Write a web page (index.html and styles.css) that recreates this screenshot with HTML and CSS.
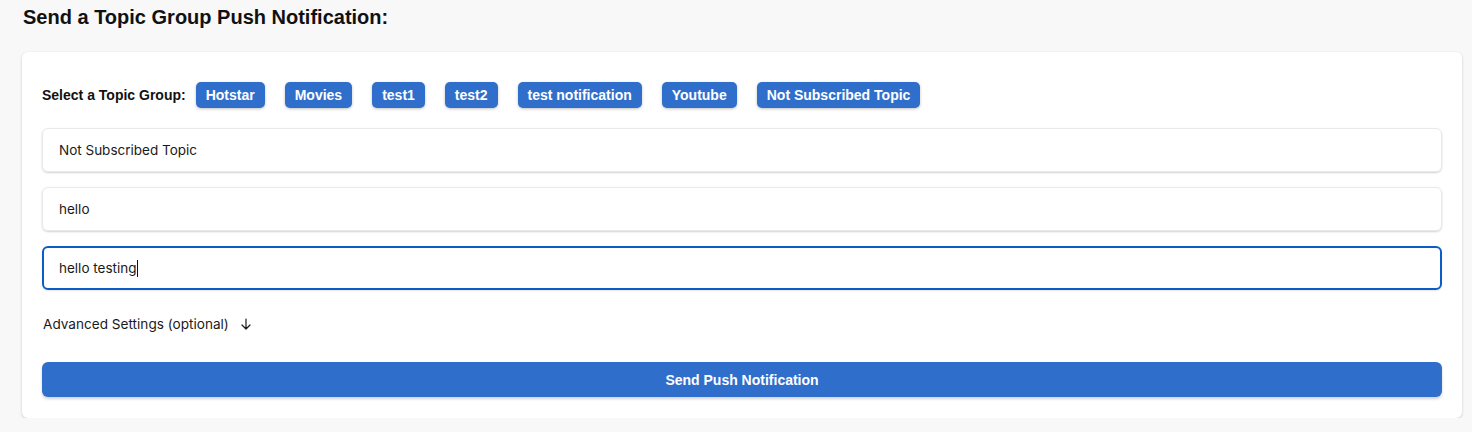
FILE: index.html
```html
<!DOCTYPE html>
<html>
<head>
<meta charset="utf-8">
<link rel="stylesheet" href="styles.css">
</head>
<body>
<div class="page">
  <h1 class="title">Send a Topic Group Push Notification:</h1>
  <div class="card">
    <div class="topics">
      <span class="topics-label">Select a Topic Group:</span>
      <button class="chip">Hotstar</button>
      <button class="chip">Movies</button>
      <button class="chip">test1</button>
      <button class="chip">test2</button>
      <button class="chip">test notification</button>
      <button class="chip">Youtube</button>
      <button class="chip">Not Subscribed Topic</button>
    </div>
    <div class="fields">
      <div class="field">Not Subscribed Topic</div>
      <div class="field">hello</div>
      <div class="field field-focus">hello testing<span class="caret"></span></div>
    </div>
    <div class="advanced">Advanced Settings (optional)
      <svg class="arrow" width="10" height="12" viewBox="0 0 10 12"><path d="M5 1 V11 M1 7 L5 11 L9 7" fill="none" stroke="#1a1a1a" stroke-width="1.2" stroke-linecap="round" stroke-linejoin="round"/></svg>
    </div>
    <button class="send">Send Push Notification</button>
  </div>
</div>
</body>
</html>
```
FILE: styles.css
```css
html, body {
  margin: 0;
  padding: 0;
  background: #f8f8f8;
}
.page {
  padding: 0 10px 0 22px;
}
.title {
  margin: 0;
  padding: 5px 0 0 1px;
  height: 52px;
  box-sizing: border-box;
  font-family: "Liberation Sans", Arial, sans-serif;
  font-weight: bold;
  font-size: 20px;
  line-height: 24px;
  color: #111;
}
.card {
  background: #fff;
  border-radius: 6px;
  box-shadow: 0 1px 3px rgba(0,0,0,0.18);
  padding: 30px 20px 21px 20px;
}
.topics {
  display: flex;
  align-items: center;
  gap: 20px;
  height: 26px;
}
.topics-label {
  font-family: "Liberation Sans", Arial, sans-serif;
  font-weight: bold;
  font-size: 14px;
  color: #111;
  margin-right: -10px;
}
.chip {
  border: none;
  height: 26px;
  background: #306ecb;
  color: #fff;
  font-family: "Liberation Sans", Arial, sans-serif;
  font-weight: bold;
  font-size: 14px;
  line-height: 16px;
  padding: 5px 10px;
  border-radius: 5px;
  box-shadow: 0 1px 3px rgba(0,0,0,0.25);
}
.fields {
  display: flex;
  flex-direction: column;
  gap: 15px;
  margin-top: 20px;
}
.field {
  height: 44px;
  box-sizing: border-box;
  border: 1px solid #e9e9e9;
  border-radius: 6px;
  box-shadow: 0 1px 2px rgba(0,0,0,0.18);
  padding: 0 16px;
  display: flex;
  align-items: center;
  font-family: Inter, "Noto Sans", sans-serif;
  font-size: 13.5px;
  color: #1a1a1a;
}
.field-focus {
  border: 2px solid #0b5cc4;
  padding: 0 15px;
  box-shadow: 0 1px 2px rgba(0,0,0,0.1);
}
.caret {
  display: inline-block;
  width: 1px;
  height: 17px;
  background: #111;
}
.advanced {
  margin-top: 25px;
  padding-left: 1px;
  display: flex;
  align-items: center;
  height: 17px;
  font-family: Inter, "Noto Sans", sans-serif;
  font-size: 13.6px;
  color: #1a1a1a;
}
.arrow {
  margin-left: 12px;
  margin-top: 1px;
}
.send {
  display: block;
  width: 100%;
  margin-top: 30px;
  height: 35px;
  border: none;
  border-radius: 6px;
  background: #306ecb;
  color: #fff;
  font-family: "Liberation Sans", Arial, sans-serif;
  font-weight: bold;
  font-size: 14px;
  box-shadow: 0 2px 3px rgba(0,0,0,0.18);
}
```
